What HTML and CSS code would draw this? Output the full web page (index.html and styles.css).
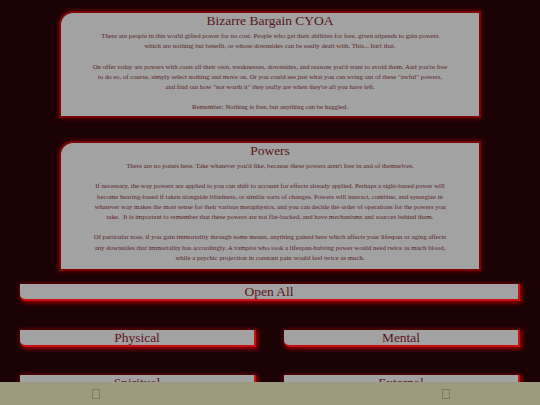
FILE: index.html
```html
<!DOCTYPE html>
<html>
<head>
<meta charset="utf-8">
<link rel="stylesheet" href="styles.css">
</head>
<body>
<div class="page">
  <section class="panel intro">
    <h1 class="panel-title">Bizarre Bargain CYOA</h1>
    <p>There are people in this world gifted power for no cost. People who get their abilities for free, given stipends to gain powers which are nothing but benefit, or whose downsides can be easily dealt with. This... Isn't that.</p>
    <p>On offer today are powers with costs all their own, weaknesses, downsides, and reasons you'd want to avoid them. And you're free to do so, of course, simply select nothing and move on. Or you could see just what you can wring out of these "awful" powers, and find out how "not worth it" they really are when they're all you have left.</p>
    <p>Remember: Nothing is free, but anything can be haggled.</p>
  </section>
  <section class="panel powers">
    <h1 class="panel-title">Powers</h1>
    <p>There are no points here. Take whatever you'd like, because these powers aren't free in and of themselves.</p>
    <p>If necessary, the way powers are applied to you can shift to account for effects already applied. Perhaps a sight-based power will become hearing-based if taken alongside blindness, or similar sorts of changes. Powers will interact, combine, and synergize in whatever way makes the most sense for their various metaphysics, and you can decide the order of operations for the powers you take.&nbsp; It is important to remember that these powers are not flat-backed, and have mechanisms and sources behind them.</p>
    <p>Of particular note, if you gain immortality through some means, anything gained here which affects your lifespan or aging affects any downsides that immortality has accordingly. A vampire who took a lifespan-halving power would need twice as much blood, while a psychic projection in constant pain would feel twice as much.</p>
  </section>
  <button class="btn open-all">Open All</button>
  <div class="categories">
    <button class="btn">Physical</button>
    <button class="btn">Mental</button>
    <button class="btn">Spiritual</button>
    <button class="btn">External</button>
  </div>
</div>
<div class="bottom-bar">
  <span class="glyph"></span>
  <span class="glyph"></span>
</div>
</body>
</html>
```
FILE: styles.css
```css
html, body {
  margin: 0;
  padding: 0;
  background: #1b0204;
  font-family: "Liberation Serif", "Times New Roman", serif;
  color: #5c1e26;
}
.page {
  width: 500px;
  margin: 0 auto;
  padding-top: 11px;
  display: flex;
  flex-direction: column;
  align-items: center;
}
.panel {
  width: 422px;
  box-sizing: border-box;
  background: #a2a2a2;
  border: 2px solid #7a0606;
  border-top-left-radius: 14px;
  box-shadow: 0 0 4px 1px #5a0000;
  text-align: center;
  padding: 0 31.5px 4px;
}
.panel-title {
  margin: 0;
  font-weight: normal;
  font-size: 13.5px;
  line-height: 16px;
  padding-bottom: 2px;
  color: #5a141a;
}
.panel p {
  margin: 0 0 10.2px;
  font-size: 6.8px;
  line-height: 10.2px;
}
.panel p:last-child {
  margin-bottom: 0;
}
.intro {
  height: 107px;
}
.powers {
  margin-top: 23px;
  height: 130px;
}
.btn {
  font-family: "Liberation Serif", "Times New Roman", serif;
  font-size: 13.5px;
  line-height: 15px;
  color: #5a141a;
  background: #a2a2a2;
  border: none;
  border-right: 2px solid #c81010;
  border-bottom: 2px solid #c81010;
  border-bottom-left-radius: 6px;
  box-shadow: 1px 1px 4px 1px #a00000;
  padding: 0;
  height: 17px;
  width: 100%;
}
.open-all {
  margin-top: 13px;
  width: 500px;
}
.categories {
  width: 500px;
  margin-top: 29px;
  display: grid;
  grid-template-columns: 236px 236px;
  column-gap: 28px;
  row-gap: 28px;
}
.bottom-bar {
  position: fixed;
  left: 0;
  right: 0;
  bottom: 0;
  height: 23px;
  background: #9d9b7f;
  display: flex;
  align-items: center;
}
.glyph {
  display: block;
  width: 6px;
  height: 8px;
  border: 1px solid #7c7a60;
}
.glyph:first-child {
  margin-left: 92px;
}
.glyph:last-child {
  margin-left: 342px;
}
```
